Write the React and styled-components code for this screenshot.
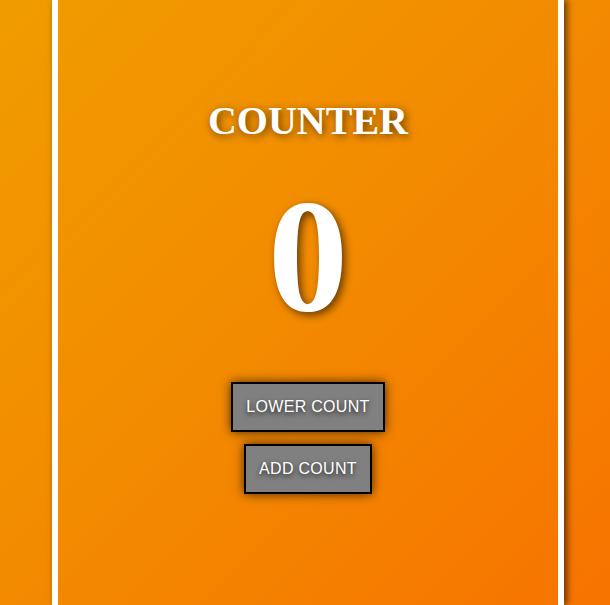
import React, { useState } from "react";
import styled, { createGlobalStyle } from "styled-components";

const GlobalStyle = createGlobalStyle`
  html, body {
    margin: 0;
    padding: 0;
    height: 100%;
  }
  body {
    background: linear-gradient(135deg, #f09c00 0%, #f38a00 50%, #f77300 100%);
    background-attachment: fixed;
  }
  #root {
    height: 100%;
  }
`;

function App() {
  const [count, setCount] = useState(0); // 카운터 값

  return (
    <Page>
      <GlobalStyle />
      <Panel>
        <Title>COUNTER</Title>
        <Count>{count}</Count>
        <ButtonStack>
          <CountBtn onClick={() => setCount(count - 1)}>LOWER COUNT</CountBtn>
          <CountBtn onClick={() => setCount(count + 1)}>ADD COUNT</CountBtn>
        </ButtonStack>
      </Panel>
    </Page>
  );
}
export default App;

const Page = styled.div`
  display: flex;
  justify-content: center;
  height: 100%;
  min-height: 605px;
  padding-left: 6px;
  box-sizing: border-box;
`;
const Panel = styled.div`
  width: 500px;
  display: flex;
  flex-direction: column;
  align-items: center;
  padding-top: 99px;
  border-left: 6px solid #ffffff;
  border-right: 6px solid #ffffff;
  box-shadow: 3px 0 7px rgba(0, 0, 0, 0.6);
`;
const Title = styled.h1`
  margin: 0;
  font-family: "Liberation Serif", "Times New Roman", serif;
  font-weight: bold;
  font-size: 40px;
  line-height: 44px;
  color: #ffffff;
  text-shadow: 2px 2px 8px rgba(0, 0, 0, 0.6);
`;
const Count = styled.div`
  margin-top: 25px;
  font-family: "Liberation Serif", "Times New Roman", serif;
  font-weight: bold;
  font-size: 160px;
  line-height: 177px;
  color: #ffffff;
  text-shadow: 3px 3px 9px rgba(0, 0, 0, 0.6);
`;
const ButtonStack = styled.div`
  margin-top: 37px;
  display: flex;
  flex-direction: column;
  align-items: center;
  gap: 12px;
`;
const CountBtn = styled.button`
  font-family: "Liberation Sans", Arial, sans-serif;
  font-size: 16px;
  letter-spacing: 0.3px;
  line-height: 18px;
  padding: 14px 13px;
  color: #ffffff;
  background-color: #808080;
  border: 2px solid #000000;
  border-radius: 0;
  box-shadow: 0 0 10px rgba(0, 0, 0, 0.7);
  text-shadow: 0 2px 5px rgba(0, 0, 0, 0.8);
  cursor: pointer;
`;
